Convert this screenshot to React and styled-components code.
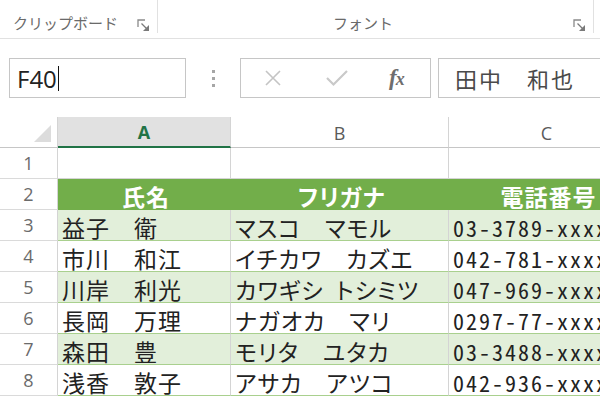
import React from "react";
import styled, { createGlobalStyle } from "styled-components";

const GlobalStyle = createGlobalStyle`
	html, body {
		margin: 0;
		padding: 0;
		background: #fff;
	}
	* {
		box-sizing: border-box;
	}
`;

const Page = styled.div`
	width: 600px;
	height: 399px;
	overflow: hidden;
	background: #fff;
	font-family: "Noto Sans CJK JP", "Noto Sans", sans-serif;
`;

const Ribbon = styled.div`
	display: flex;
	height: 39px;
	border-bottom: 1px solid #e1e1e1;
	width: 700px;
`;

const Group = styled.div`
	display: flex;
	align-items: flex-end;
	width: ${(p) => p.$width}px;
	height: 33px;
	padding-left: ${(p) => p.$labelLeft}px;
	padding-right: 7px;
	border-right: 1px solid #e1e1e1;
`;

const GroupLabel = styled.span`
	font-size: 15px;
	line-height: 20px;
	color: #6a6a6a;
	white-space: nowrap;
`;

const Launcher = styled.svg`
	margin-left: auto;
	margin-bottom: 1px;
`;

const FormulaBar = styled.div`
	display: flex;
	align-items: center;
	height: 78px;
	padding: 0 0 0 9px;
	width: 700px;
`;

const NameBox = styled.div`
	display: flex;
	align-items: center;
	width: 177px;
	height: 40px;
	border: 1px solid #c6c6c6;
	padding-left: 7px;
	font-family: "Open Sans", "Liberation Sans", sans-serif;
	font-size: 24px;
	color: #222;
`;

const Caret = styled.span`
	display: inline-block;
	width: 1.5px;
	height: 25px;
	margin-left: 1px;
	background: #111;
`;

const Dots = styled.div`
	display: flex;
	flex-direction: column;
	gap: 4px;
	width: 54px;
	align-items: center;
	span {
		width: 3px;
		height: 3px;
		background: #a6a6a6;
	}
`;

const Buttons = styled.div`
	display: flex;
	align-items: center;
	width: 191px;
	height: 40px;
	border: 1px solid #c6c6c6;
	padding-left: 22px;
`;

const Fx = styled.span`
	margin-left: 40px;
	font-family: "Liberation Serif", "DejaVu Serif", serif;
	font-style: italic;
	font-weight: 700;
	font-size: 23px;
	color: #6e6e6e;
	letter-spacing: -1px;
	i {
		font-size: 18px;
	}
`;

const FormulaInput = styled.div`
	display: flex;
	align-items: center;
	flex: 1;
	height: 40px;
	margin-left: 7px;
	border: 1px solid #c6c6c6;
	padding-left: 16px;
	font-size: 22px;
	letter-spacing: 2px;
	color: #4a4a4a;
`;

const Sheet = styled.div`
	display: grid;
	grid-template-columns: 58px 173px 218px 196px;
	grid-template-rows: 31px;
	grid-auto-rows: 31px;
	width: 645px;
`;

const Corner = styled.div`
	display: flex;
	justify-content: flex-end;
	align-items: flex-end;
	padding: 0 6px 5px 0;
	border-right: 1px solid #d4d4d4;
	border-bottom: 1px solid #c6c6c6;
	&::after {
		content: "";
		width: 0;
		height: 0;
		border-left: 17px solid transparent;
		border-bottom: 17px solid #dcdcdc;
	}
`;

const ColHead = styled.div`
	display: flex;
	align-items: center;
	justify-content: center;
	padding-top: 1px;
	background: ${(p) => (p.$active ? "#e1e1e1" : "#fff")};
	border-right: 1px solid #d4d4d4;
	border-bottom: ${(p) => (p.$active ? "2px solid #217346" : "1px solid #c6c6c6")};
	font-family: "Open Sans", "Liberation Sans", sans-serif;
	font-size: 18px;
	font-weight: ${(p) => (p.$active ? 700 : 400)};
	color: ${(p) => (p.$active ? "#217346" : "#5a5a5a")};
`;

const RowHead = styled.div`
	display: flex;
	align-items: flex-end;
	justify-content: center;
	padding-bottom: 3px;
	border-right: 1px solid #d4d4d4;
	border-bottom: 1px solid #dadada;
	font-family: "Open Sans", "Liberation Sans", sans-serif;
	font-size: 18px;
	color: #6b6b6b;
`;

const cellBg = { head: "#72ae4a", band: "#e2efda", plain: "#fff", empty: "#fff" };
const features = { name: "normal", kana: '"palt"', phone: '"hwid"' };

const Cell = styled.div`
	display: flex;
	align-items: flex-start;
	justify-content: ${(p) => (p.$kind === "head" ? "center" : "flex-start")};
	padding: 5px 0 0 4px;
	white-space: nowrap;
	background: ${(p) => cellBg[p.$kind]};
	border-right: 1px solid ${(p) => (p.$kind === "head" ? "#72ae4a" : "#d4d4d4")};
	border-bottom: 1px solid ${(p) => (p.$kind === "empty" ? "#d4d4d4" : p.$kind === "head" ? "#72ae4a" : "#a9d08e")};
	font-size: ${(p) => (p.$type === "phone" ? 22 : 23)}px;
	line-height: 25px;
	letter-spacing: ${(p) => (p.$type === "phone" ? 2 : 1)}px;
	font-weight: ${(p) => (p.$kind === "head" ? 700 : 400)};
	font-feature-settings: ${(p) => features[p.$type] || "normal"};
	color: ${(p) => (p.$kind === "head" ? "#fff" : "#222")};
`;

const columns = ["A", "B", "C"];
const types = ["name", "kana", "phone"];
const header = ["氏名", "フリガナ", "電話番号"];
const people = [
	["益子　衛", "マスコ　マモル", "03-3789-xxxx"],
	["市川　和江", "イチカワ　カズエ", "042-781-xxxx"],
	["川岸　利光", "カワギシ\u2002トシミツ", "047-969-xxxx"],
	["長岡　万理", "ナガオカ　マリ", "0297-77-xxxx"],
	["森田　豊", "モリタ　ユタカ", "03-3488-xxxx"],
	["浅香　敦子", "アサカ　アツコ", "042-936-xxxx"],
];

function LauncherIcon() {
	return (
		<Launcher width="13" height="13" viewBox="0 0 13 13">
			<path d="M1 8 V1 H8" fill="none" stroke="#8a8a8a" strokeWidth="1.3" />
			<path d="M4.5 4.5 L10 10" stroke="#7a7a7a" strokeWidth="1.3" />
			<path d="M12 6 V12 H6 Z" fill="#7a7a7a" />
		</Launcher>
	);
}

function App() {
	return (
		<Page>
			<GlobalStyle />
			<Ribbon>
				<Group $width={158} $labelLeft={13}>
					<GroupLabel>クリップボード</GroupLabel>
					<LauncherIcon />
				</Group>
				<Group $width={436} $labelLeft={175}>
					<GroupLabel>フォント</GroupLabel>
					<LauncherIcon />
				</Group>
			</Ribbon>
			<FormulaBar>
				<NameBox>
					F40
					<Caret />
				</NameBox>
				<Dots>
					<span />
					<span />
					<span />
				</Dots>
				<Buttons>
					<svg width="20" height="18" viewBox="0 0 20 18">
						<path d="M3 2 L17 16 M17 2 L3 16" stroke="#c4c4c4" strokeWidth="1.6" />
					</svg>
					<svg width="24" height="18" viewBox="0 0 24 18" style={{ marginLeft: 42 }}>
						<path d="M2 9 L8.5 15.5 L22 2" fill="none" stroke="#c9c9c9" strokeWidth="2.2" />
					</svg>
					<Fx>
						f<i>x</i>
					</Fx>
				</Buttons>
				<FormulaInput>田中　和也</FormulaInput>
			</FormulaBar>
			<Sheet>
				<Corner />
				{columns.map((c) => (
					<ColHead key={c} $active={c === "A"}>
						{c}
					</ColHead>
				))}
				<RowHead>1</RowHead>
				{columns.map((c) => (
					<Cell key={c} $kind="empty" />
				))}
				<RowHead>2</RowHead>
				{header.map((h, j) => (
					<Cell key={h} $kind="head" $type={types[j] === "phone" ? "name" : types[j]}>
						{h}
					</Cell>
				))}
				{people.map((row, i) => (
					<React.Fragment key={row[0]}>
						<RowHead>{i + 3}</RowHead>
						{row.map((v, j) => (
							<Cell key={j} $kind={i % 2 === 0 ? "band" : "plain"} $type={types[j]}>
								{v}
							</Cell>
						))}
					</React.Fragment>
				))}
			</Sheet>
		</Page>
	);
}

export default App;
